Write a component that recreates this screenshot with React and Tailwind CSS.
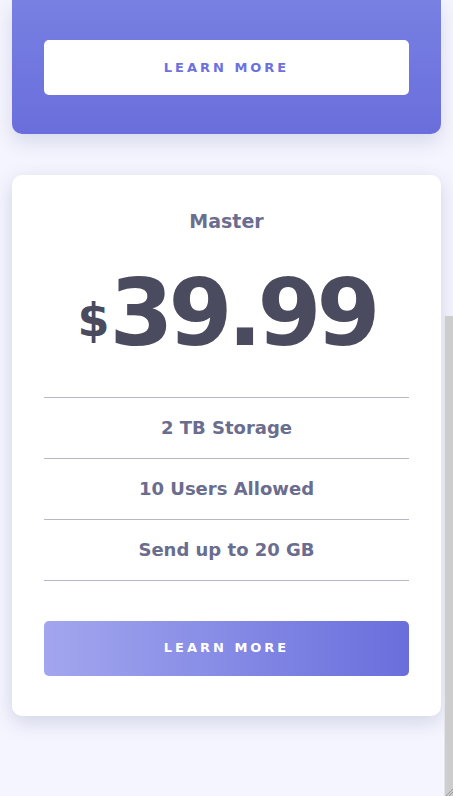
export default function App() {
  const features = ["2 TB Storage", "10 Users Allowed", "Send up to 20 GB"];

  return (
    <div
      className="relative min-h-[796px] bg-[#f4f5fe] px-3 pb-20 overflow-hidden"
      style={{ fontFamily: '"DejaVu Sans", "Open Sans", sans-serif' }}
    >
      {/* Previous plan card (scrolled partly out of view) */}
      <div className="rounded-b-[10px] bg-gradient-to-b from-[#7880e2] to-[#6a6edc] px-8 pt-10 pb-[39px] shadow-[0_8px_20px_rgba(60,60,120,0.15)]">
        <button className="flex h-[55px] w-full items-center justify-center rounded-[5px] bg-white text-[13px] font-bold tracking-[3px] text-[#6d71de]">
          LEARN MORE
        </button>
      </div>

      {/* Master plan card */}
      <div className="mt-[41px] rounded-[10px] bg-white px-8 pt-8 pb-10 shadow-[0_6px_20px_rgba(60,60,120,0.18)]">
        <h3 className="text-center text-[19px] font-bold text-[#6b6e8e]">
          Master
        </h3>

        <div className="mt-8 flex items-center justify-center text-[#4a4b5e]">
          <span className="mt-3 text-[46px] font-bold leading-none">$</span>
          <span className="text-[92px] font-bold leading-none tracking-[-5px]">
            39.99
          </span>
        </div>

        <ul className="mt-[37px] border-t border-[#b7b7cc]">
          {features.map((f) => (
            <li
              key={f}
              className="flex h-[61px] items-center justify-center border-b border-[#b7b7cc] text-[18px] font-bold text-[#6a6d8d]"
            >
              {f}
            </li>
          ))}
        </ul>

        <button className="mt-10 flex h-[55px] w-full items-center justify-center rounded-[5px] bg-gradient-to-r from-[#a3a6ee] to-[#6a6edc] text-[13px] font-bold tracking-[3px] text-white">
          LEARN MORE
        </button>
      </div>

      {/* Scrollbar thumb */}
      <div className="absolute right-0 top-[316px] h-[480px] w-[9px] border-l border-[#e4e4ec] bg-[#cdcdcd]" />
      <svg
        className="absolute right-0 bottom-0"
        width="9"
        height="9"
        viewBox="0 0 9 9"
      >
        <path d="M9 2 L2 9 M9 5 L5 9" stroke="#999" strokeWidth="1" />
      </svg>
    </div>
  );
}
